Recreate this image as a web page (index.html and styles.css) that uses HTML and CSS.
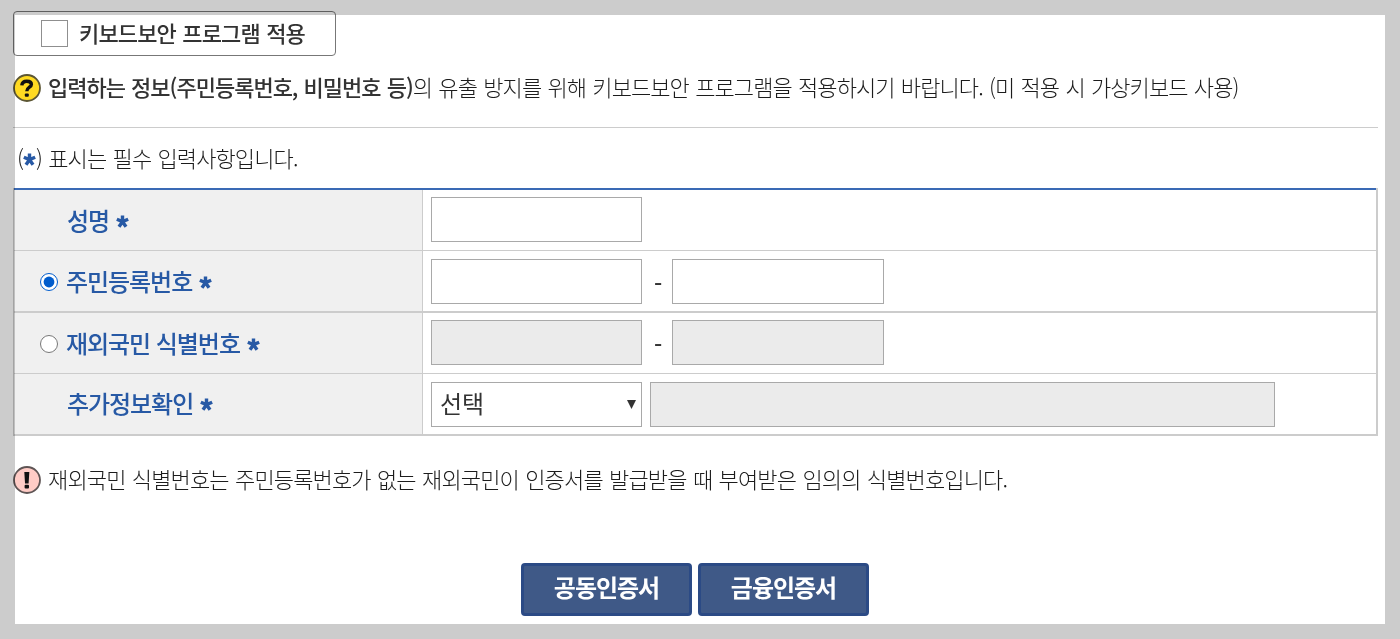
FILE: index.html
```
<!DOCTYPE html>
<html lang="ko">
<head>
  <meta charset="UTF-8">
  <meta name="viewport" content="width=device-width, initial-scale=1.0">
  <title>본인인증</title>
  <link rel="stylesheet" href="styles.css">
</head>
<body>
  <svg class="defs" width="0" height="0">
    <symbol id="star" viewBox="0 0 14 14">
      <path d="M7 .6V7M.9 4.6L7 7.2L13.1 4.6M3.2 12.6L7 7.2L10.8 12.6" fill="none" stroke="currentColor" stroke-width="3.7" />
    </symbol>
  </svg>

  <div class="page">
    <label class="keyboard">
      <input type="checkbox" class="check">
      <span class="keyboard-text">키보드보안 프로그램 적용</span>
    </label>

    <p class="notice notice-top">
      <svg class="icon" viewBox="0 0 28 28">
        <circle cx="14" cy="14" r="13" fill="#ffda22" stroke="#5c5634" stroke-width="1.8" />
        <path d="M8.8 11.3C9.1 8 11.2 7.2 13.8 7.2C16.8 7.2 18.4 8.5 18.4 10.4C18.4 13.2 13.8 13.2 13.8 17.2" fill="none" stroke="#111" stroke-width="3.4" />
        <rect x="11.8" y="19.4" width="4" height="3.4" rx="1" fill="#111" />
      </svg>
      <span class="notice-text"><b>입력하는 정보(주민등록번호, 비밀번호 등)</b>의 유출 방지를 위해 키보드보안 프로그램을 적용하시기 바랍니다. (미 적용 시 가상키보드 사용)</span>
    </p>

    <p class="required">(<svg class="star"><use href="#star" /></svg>) 표시는 필수 입력사항입니다.</p>

    <div class="form">
      <div class="row">
        <div class="head"><span class="label indent">성명</span><svg class="star"><use href="#star" /></svg></div>
        <div class="cell"><input type="text" class="input"></div>
      </div>
      <div class="row thick">
        <div class="head">
          <input type="radio" name="idtype" class="radio" checked><span class="label">주민등록번호</span><svg class="star"><use href="#star" /></svg>
        </div>
        <div class="cell low">
          <input type="text" class="input"><span class="dash">-</span><input type="text" class="input second">
        </div>
      </div>
      <div class="row">
        <div class="head">
          <input type="radio" name="idtype" class="radio"><span class="label">재외국민 식별번호</span><svg class="star"><use href="#star" /></svg>
        </div>
        <div class="cell">
          <input type="text" class="input" disabled><span class="dash">-</span><input type="text" class="input second" disabled>
        </div>
      </div>
      <div class="row thick last">
        <div class="head"><span class="label indent">추가정보확인</span><svg class="star"><use href="#star" /></svg></div>
        <div class="cell low">
          <div class="input select"><span>선택</span><svg class="arrow" viewBox="0 0 10 10"><path d="M0 0H10L5 10Z" fill="#333" /></svg></div>
          <input type="text" class="input wide" disabled>
        </div>
      </div>
    </div>

    <p class="notice notice-bottom">
      <svg class="icon" viewBox="0 0 28 28">
        <circle cx="14" cy="14" r="13" fill="#ffccc6" stroke="#5f5555" stroke-width="1.8" />
        <path d="M11.3 6H16.3L15.6 17.5H12Z" fill="#111" />
        <rect x="11.6" y="18.8" width="4.4" height="3.6" rx="1" fill="#111" />
      </svg>
      <span class="notice-text">재외국민 식별번호는 주민등록번호가 없는 재외국민이 인증서를 발급받을 때 부여받은 임의의 식별번호입니다.</span>
    </p>

    <div class="buttons">
      <button class="btn">공동인증서</button>
      <button class="btn">금융인증서</button>
    </div>
  </div>
</body>
</html>
```
FILE: styles.css
```
* {
  box-sizing: border-box;
}
body {
  margin: 0;
  overflow: hidden;
  font-family: "Noto Sans CJK KR", sans-serif;
  color: #333;
  background: #fff;
}
p {
  margin: 0;
}
input {
  margin: 0;
}
.defs {
  position: absolute;
}
.page {
  position: relative;
  height: 639px;
  padding: 11px 22px 0 13px;
}
/* grey frame laid over the edges of the content */
.page::after {
  content: "";
  position: absolute;
  inset: 0;
  border: 15px solid #ccc;
  mix-blend-mode: multiply;
  pointer-events: none;
}
.keyboard {
  display: flex;
  align-items: center;
  width: 323px;
  height: 45px;
  padding-left: 27px;
  border: 1px solid #777;
  border-radius: 4px;
}
.check {
  appearance: none;
  width: 27px;
  height: 27px;
  border: 1px solid #8f8f8f;
  background: #fff;
}
.keyboard-text {
  margin-left: 11px;
  padding-bottom: 2px;
  font-size: 22px;
  font-weight: 500;
  letter-spacing: -0.85px;
  word-spacing: 1px;
  line-height: 41px;
}
.notice {
  display: flex;
  align-items: center;
  color: #1c1c1c;
  font-size: 22px;
  font-weight: 300;
  letter-spacing: -0.92px;
  word-spacing: 1px;
  line-height: 30px;
  white-space: nowrap;
}
.notice b {
  color: #333;
  font-weight: 500;
  letter-spacing: -1px;
}
.notice-text {
  padding-bottom: 4px;
}
.icon {
  width: 28px;
  height: 28px;
  margin-right: 7px;
}
.notice-top {
  width: 1365px;
  height: 72px;
  padding-bottom: 7px;
  border-bottom: 1px solid #ccc;
}
.required {
  height: 60px;
  padding-left: 4px;
  color: #1c1c1c;
  font-size: 22px;
  font-weight: 300;
  letter-spacing: -0.9px;
  word-spacing: 1px;
  line-height: 58px;
}
.star {
  width: 13px;
  height: 13px;
  color: #2759a5;
}
.required .star {
  margin-bottom: 1px;
}
.form {
  width: 1365px;
  border: solid #ccc;
  border-width: 0 2px 0 1px;
}
.row {
  display: flex;
  height: 61px;
  border-bottom: 1px solid #ccc;
}
.row:first-child {
  height: 63px;
  border-top: 2px solid #3a6ab5;
}
.row.thick {
  height: 62px;
  border-bottom-width: 2px;
}
.head {
  display: flex;
  align-items: center;
  width: 409px;
  padding-left: 26px;
  border-right: 1px solid #ccc;
  background: #f0f0f0;
}
.last .head {
  padding-bottom: 2px;
}
.label {
  color: #2759a5;
  font-size: 24px;
  font-weight: 500;
  letter-spacing: -1.05px;
  line-height: 58px;
}
.indent {
  margin-left: 27px;
}
.head .star {
  margin: 3px 0 0 7px;
}
.radio {
  width: 18px;
  height: 18px;
  margin: 2px 8px 0 0;
  accent-color: #005ccc;
}
.cell {
  display: flex;
  padding: 7px 0 0 8px;
}
.cell.low {
  padding-top: 8px;
}
.input {
  width: 211px;
  height: 45px;
  padding: 0 10px;
  border: 1px solid #a9a9a9;
  border-radius: 0;
  background: #fff;
}
.input:disabled {
  background: #ebebeb;
}
.second {
  width: 212px;
}
.wide {
  width: 625px;
  margin-left: 8px;
}
.dash {
  width: 30px;
  padding-left: 2px;
  font-size: 23px;
  font-weight: 500;
  line-height: 48px;
  text-align: center;
}
.select {
  display: flex;
  align-items: center;
  justify-content: space-between;
  padding: 0 5px 0 8px;
  font-size: 24px;
  line-height: 39px;
}
.select span {
  padding-bottom: 4px;
}
.arrow {
  width: 9px;
  height: 9px;
}
.notice-bottom {
  height: 88px;
  letter-spacing: -0.86px;
}
.buttons {
  display: flex;
  gap: 6px;
  margin: 39px 0 0 508px;
}
.btn {
  width: 171px;
  height: 53px;
  padding: 0 0 6px;
  border: 3px solid #2b4a85;
  border-radius: 4px;
  background: #3f5987;
  color: #fff;
  font-family: inherit;
  font-size: 24px;
  font-weight: 700;
  letter-spacing: -1px;
}
```
